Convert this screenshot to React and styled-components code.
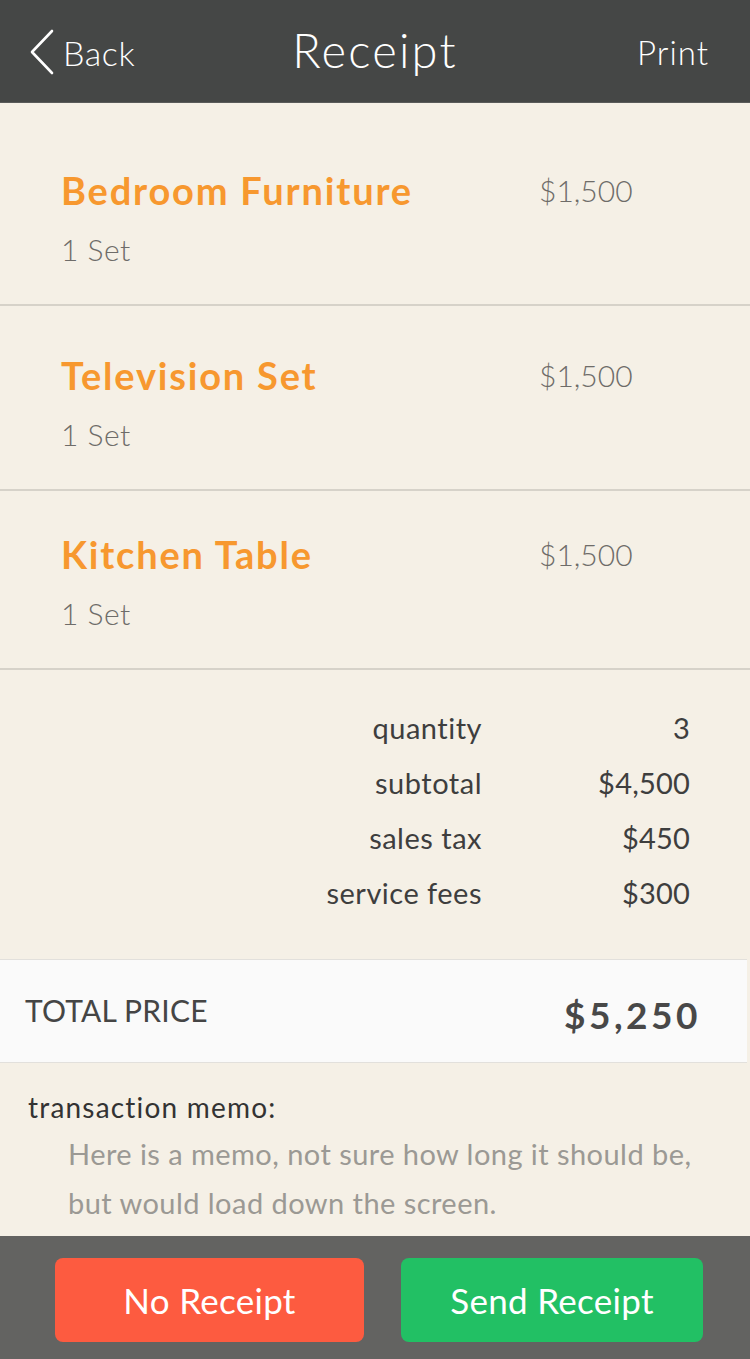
import React from "react";
import styled, { createGlobalStyle } from "styled-components";

const items = [
  { name: "Bedroom Furniture", qty: "1 Set", price: "$1,500", top: 65 },
  { name: "Television Set", qty: "1 Set", price: "$1,500", top: 47 },
  { name: "Kitchen Table", qty: "1 Set", price: "$1,500", top: 41 },
];

const summary = [
  ["quantity", "3"],
  ["subtotal", "$4,500"],
  ["sales tax", "$450"],
  ["service fees", "$300"],
];

export default () => {
  return (
    <Wrapper>
      <GlobalStyle />
      <Header>
        <BackButton>
          <svg width="28" height="46" viewBox="0 0 28 46">
            <polyline
              points="24,2 4,23 24,44"
              fill="none"
              stroke="#fff"
              strokeWidth="2.6"
              strokeLinecap="round"
              strokeLinejoin="round"
            />
          </svg>
          Back
        </BackButton>
        <Title>Receipt</Title>
        <PrintButton>Print</PrintButton>
      </Header>

      <Content>
        {items.map((item) => (
          <ItemRow key={item.name} top={item.top}>
            <ItemInfo>
              <ItemName>{item.name}</ItemName>
              <ItemQty>{item.qty}</ItemQty>
            </ItemInfo>
            <ItemPrice>{item.price}</ItemPrice>
          </ItemRow>
        ))}

        <Summary>
          {summary.map(([label, value]) => (
            <SummaryRow key={label}>
              <SummaryLabel>{label}</SummaryLabel>
              <SummaryValue>{value}</SummaryValue>
            </SummaryRow>
          ))}
        </Summary>

        <TotalBox>
          <TotalLabel>Total Price</TotalLabel>
          <TotalValue>$5,250</TotalValue>
        </TotalBox>

        <Memo>
          <MemoLabel>transaction memo:</MemoLabel>
          <MemoText>
            Here is a memo, not sure how long it should be,
            <br />
            but would load down the screen.
          </MemoText>
        </Memo>
      </Content>

      <Footer>
        <ActionButton color="#fd5b40" width="309px">No Receipt</ActionButton>
        <ActionButton color="#22c064" width="302px">Send Receipt</ActionButton>
      </Footer>
    </Wrapper>
  );
};

const GlobalStyle = createGlobalStyle`
  html, body {
    margin: 0;
    padding: 0;
    background: #f5f0e6;
  }
  * {
    box-sizing: border-box;
  }
`;

const Wrapper = styled.div`
  width: 750px;
  height: 1359px;
  display: flex;
  flex-direction: column;
  font-family: Lato, "Open Sans", sans-serif;
  background: #f5f0e6;
  overflow: hidden;
`;

const Header = styled.div`
  height: 103px;
  flex-shrink: 0;
  background: #454746;
  border-bottom: 1px solid #5a5b5a;
  display: flex;
  align-items: center;
  justify-content: space-between;
  padding: 0 41px 0 28px;
  color: #fff;
  position: relative;
`;

const BackButton = styled.div`
  display: flex;
  align-items: center;
  gap: 7px;
  font-size: 34px;
  font-weight: 300;
  letter-spacing: 0.6px;
  margin-top: 2px;
`;

const Title = styled.div`
  position: absolute;
  left: 0;
  right: 0;
  text-align: center;
  font-size: 47px;
  font-weight: 300;
  letter-spacing: 2.2px;
  pointer-events: none;
  margin-top: -2px;
`;

const PrintButton = styled.div`
  font-size: 33px;
  font-weight: 300;
  letter-spacing: 1px;
  margin-top: 2px;
`;

const Content = styled.div`
  flex: 1;
  display: flex;
  flex-direction: column;
`;

const ItemRow = styled.div`
  display: flex;
  align-items: flex-start;
  padding: ${(p) => p.top}px 0 37px 61px;
  border-bottom: 2px solid #d6d2c9;
`;

const ItemInfo = styled.div`
  width: 478px;
  display: flex;
  flex-direction: column;
  gap: 19px;
`;

const ItemName = styled.div`
  font-size: 38px;
  font-weight: 700;
  color: #f7982f;
  line-height: 44px;
  letter-spacing: 1.8px;
`;

const ItemQty = styled.div`
  font-size: 30px;
  color: #6e6c69;
  line-height: 36px;
  font-weight: 300;
  letter-spacing: 0.5px;
`;

const ItemPrice = styled.div`
  font-size: 30px;
  color: #6e6c69;
  line-height: 44px;
  font-weight: 300;
`;

const Summary = styled.div`
  display: flex;
  flex-direction: column;
  gap: 21px;
  padding: 41px 0 49px;
`;

const SummaryRow = styled.div`
  display: grid;
  grid-template-columns: 482px 208px;
  font-size: 29px;
  line-height: 34px;
  letter-spacing: 0.5px;
  color: #3e3e3e;
`;

const SummaryLabel = styled.div`
  text-align: right;
`;

const SummaryValue = styled.div`
  text-align: right;
  letter-spacing: 0.2px;
`;

const TotalBox = styled.div`
  height: 104px;
  margin-right: 3px;
  background: #fafafa;
  border-top: 1px solid #e2e0dc;
  border-bottom: 1px solid #e2e0dc;
  display: flex;
  align-items: center;
  justify-content: space-between;
  padding: 0 46px 0 25px;
`;

const TotalLabel = styled.div`
  font-size: 30px;
  text-transform: uppercase;
  color: #454545;
  font-weight: 400;
  letter-spacing: 0.2px;
  margin-top: -3px;
`;

const TotalValue = styled.div`
  font-size: 37px;
  font-weight: 700;
  letter-spacing: 3.5px;
  color: #484848;
  margin-top: 6px;
`;

const Memo = styled.div`
  display: flex;
  flex-direction: column;
  padding: 27px 0 0 28px;
`;

const MemoLabel = styled.div`
  font-size: 28px;
  color: #333;
  line-height: 34px;
  letter-spacing: 1.2px;
`;

const MemoText = styled.div`
  padding-left: 40px;
  font-size: 29px;
  line-height: 49px;
  color: #9b9994;
  letter-spacing: 0.45px;
  margin-top: 5px;
  white-space: nowrap;
`;

const Footer = styled.div`
  height: 123px;
  flex-shrink: 0;
  background: #636361;
  display: flex;
  align-items: flex-start;
  justify-content: space-between;
  padding: 22px 47px 0 55px;
`;

const ActionButton = styled.button`
  width: ${(p) => p.width};
  height: 84px;
  border: none;
  border-radius: 8px;
  background: ${(p) => p.color};
  color: #fff;
  font-family: Lato, "Open Sans", sans-serif;
  font-size: 35px;
  font-weight: 400;
  letter-spacing: 0.3px;
  padding: 0;
`;
